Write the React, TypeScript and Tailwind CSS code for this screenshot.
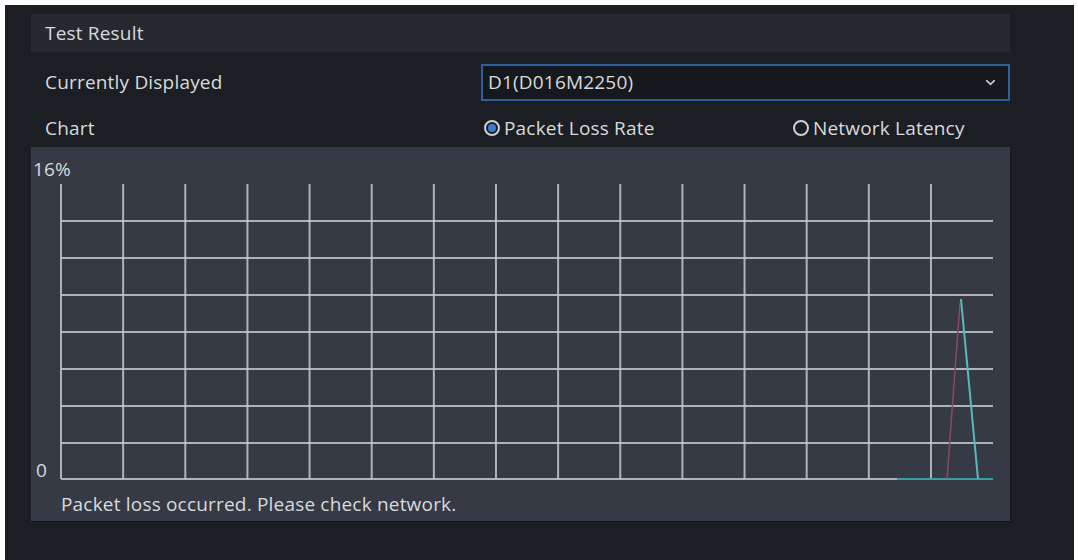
import { ChevronDown } from 'lucide-react'

const font = { fontFamily: '"Open Sans", "Liberation Sans", sans-serif' }

const vLines = Array.from({ length: 15 }, (_, i) => 30 + i * 62.14)
const hLines = [42, 79, 116, 153, 190, 227, 264, 300]

function Radio({ checked, label }: { checked?: boolean; label: string }) {
  return (
    <label className="flex items-center gap-[4px] cursor-pointer">
      <span className="w-[16px] h-[16px] rounded-full border-[2px] border-[#cdd1d6] flex items-center justify-center">
        {checked && <span className="w-[8px] h-[8px] rounded-full bg-[#3b7fd4]" />}
      </span>
      <span>{label}</span>
    </label>
  )
}

export default function App() {
  return (
    <div className="w-[1078px] h-[560px] bg-white pt-[5px] pl-[5px] pr-[4px] flex flex-col" style={font}>
      <div className="flex-1 bg-[#1b1e23] pl-[26px] pt-[9px] text-[19px] text-[#d8dadd] tracking-[0.01em]">
        <div className="w-[979px]">

          {/* Header */}
          <div className="h-[38px] bg-[#26292f] pl-[14px] flex items-center">Test Result</div>

          {/* Currently displayed */}
          <div className="flex pt-[12px]">
            <div className="w-[450px] pl-[14px] flex items-center">Currently Displayed</div>
            <div className="flex-1 h-[37px] border-[2px] border-[#2f5f9e] bg-[#15181c] flex items-center justify-between pl-[5px] pr-[10px]">
              <span>D1(D016M2250)</span>
              <ChevronDown size={15} strokeWidth={2.5} className="text-[#c8ccd2]" />
            </div>
          </div>

          {/* Chart type */}
          <div className="flex h-[46px] pt-[8px] items-center">
            <div className="w-[453px] pl-[14px]">Chart</div>
            <div className="w-[309px]">
              <Radio checked label="Packet Loss Rate" />
            </div>
            <Radio label="Network Latency" />
          </div>

          {/* Chart panel */}
          <div className="h-[374px] bg-[#353a44] pt-[12px] shadow-[1px_1px_0_#131519]">
            <div className="h-[20px] leading-[20px] pl-[2px]">16%</div>
            <div className="relative h-[304px]">
              <span className="absolute left-[5px] top-[281px] leading-[20px]">0</span>
              <svg width="979" height="304" viewBox="0 0 979 304">
                {vLines.map(x => (
                  <line key={x} x1={x} y1={5} x2={x} y2={300} stroke="#c4c8ce" strokeWidth={2} strokeOpacity={0.85} />
                ))}
                {hLines.map(y => (
                  <line key={y} x1={30} y1={y} x2={962} y2={y} stroke="#c4c8ce" strokeWidth={2} strokeOpacity={0.85} />
                ))}
                <line x1={866} y1={300} x2={962} y2={300} stroke="#3b9ea6" strokeWidth={2} />
                <polyline points="916,300 929,124" fill="none" stroke="#8a4a63" strokeWidth={1.5} />
                <polyline points="930,120 947,300" fill="none" stroke="#5fb7bb" strokeWidth={2} />
              </svg>
            </div>
            <div className="mt-[11px] h-[20px] leading-[20px] pl-[30px]">Packet loss occurred. Please check network.</div>
          </div>
        </div>
      </div>
    </div>
  )
}
